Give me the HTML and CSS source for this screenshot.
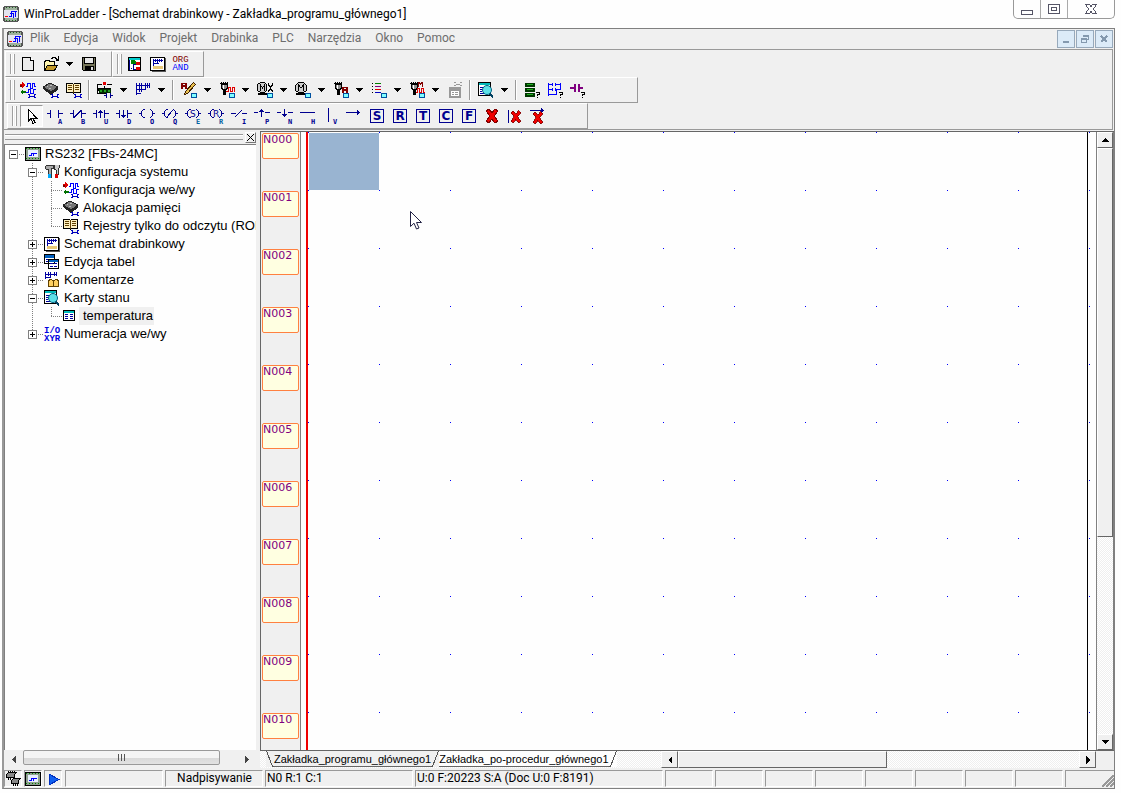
FILE: index.html
```html
<!DOCTYPE html>
<html lang="pl">
<head>
    <meta charset="UTF-8">
    <meta name="viewport" content="width=device-width, initial-scale=1.0">
    <title>WinProLadder</title>
    <link rel="stylesheet" href="styles.css">
</head>
<body>
    <svg class="sprite" width="0" height="0" aria-hidden="true">
        <defs>
            <!-- shared parts -->
            <g id="mini"><rect x="10.5" y="11.5" width="5" height="4" fill="#80ffff" stroke="#0050a0"/><path d="M10 11.5h6" stroke="#0050a0"/></g>
            <g id="wrench"><path d="M8 12.5h1.5M8 15.5h1.5M14 12.5h2M14 15.5h2M9.5 13v2M14.5 13v2M10 14.5h4" stroke="#0000c0" fill="none"/></g>
            <g id="lamp"><path d="M1 1.5h8M2.5 0v3M4.5 0v3M6.5 0v3M8.5 0v3" stroke="#000" fill="none"/><path d="M2.500 2.500h6v3l-1 2h-4l-1-2z" fill="#909090" stroke="#000"/><path d="M4 8h3v5H4z" fill="#000"/><path d="M4 3h1v4H4z" fill="#fff"/></g>
            <g id="rungs"><path d="M1.500 1v12M1 3.500h14M1 7.500h9M1 11.500h5M4.500 1v5M6.500 1v5M10.500 1v7M12.500 1v5M4.500 6v4M6.500 6v4M14.500 1v5" fill="none"/></g>
            <g id="contact"><path d="M0 5.500h4M3.500 2v8M11.500 2v8M12 5.500h4"/></g>
            <g id="coil"><path d="M0 5.500h2M5.500 1.500h-1l-2 2v4l2 2h1M10.500 1.500h1l2 2v4l-2 2h-1M14 5.500h2"/></g>
            <g id="cross"><path d="M2 3l3-2 3 4 3-4 3 2-4 5 4 5-3 2-3-4-3 4-3-2 4-5z" fill="#f00000" stroke="#800000"/></g>

            <symbol id="app" viewBox="0 0 16 16"><path d="M1 0h14v1h1v14h-1v1H1v-1H0V1h1z" fill="#555"/><path d="M2 1h12v3H2zM2 12h12v3H2z" fill="#9db09d"/><path d="M1 4h14v8H1z" fill="#e4e4f0"/><path d="M3 1.500h10M3 14.500h10" stroke="#206020" stroke-dasharray="1 2"/><path d="M2 10.500h3" stroke="#f00"/><path d="M6 10.500h2v-5h6M7 7.500h3v4M12.500 6v5" stroke="#00f" fill="none"/></symbol>
            <symbol id="plc" viewBox="0 0 16 16"><path d="M.5 1.500h15v13H.5z" fill="#8fa08f" stroke="#000"/><path d="M3 4h10v7H3z" fill="#e8f0ff"/><path d="M1 2.500h14M1 12.500h14" stroke="#008000" stroke-dasharray="1 2"/><path d="M4 9.500h2v-2h6M8.500 8v2" stroke="#00f" fill="none"/></symbol>
            <symbol id="new" viewBox="0 0 16 16"><path d="M2.500 1.500h8l3 3v10h-11z" fill="#ececec" stroke="#000"/><path d="M10.500 1.500v3h3" fill="#fff" stroke="#000"/></symbol>
            <symbol id="open" viewBox="0 0 16 16"><path d="M1.500 14.500v-9h1v-1h4v1h5v3" fill="#fff6b0" stroke="#000"/><path d="M1.500 14.500l3-5h10l-3 5z" fill="#c49a28" stroke="#000"/><path d="M8.500 3v-1h1v-1h3v1h1v1h1M15.500 0v4h-3" fill="none" stroke="#000"/></symbol>
            <symbol id="save" viewBox="0 0 16 16"><path d="M1.500 1.500h13v13h-12l-1-1z" fill="#77775a" stroke="#000"/><path d="M4 2h8v6H4z" fill="#e6e6e6" stroke="none"/><path d="M3.500 1.500v6h9v-6" fill="none" stroke="#000"/><path d="M4 10h9v5H4z" fill="#000"/><path d="M10 11h2v3h-2z" fill="#ddd"/></symbol>
            <symbol id="project" viewBox="0 0 16 16"><path d="M1.500 1.500h12v13h-12z" fill="#fff" stroke="#000"/><path d="M2 2h11v2H2z" fill="#0cc"/><path d="M2 4h1v10H2zM4 12h1v1H4z" fill="#00008b"/><path d="M4 4h4v1h1v3H4z" fill="#008000"/><path d="M6.500 8v5h3M6.500 8.500h3" stroke="#00008b" fill="none"/><path d="M9 6h4v3H9zM9 11h4v3H9z" fill="#e00000"/></symbol>
            <symbol id="ladder" viewBox="0 0 16 16"><path d="M.5 1.500h14v13H.5z" fill="#fff" stroke="#000"/><path d="M15 2h1v14H2v-1h13z" fill="#555"/><path d="M3.500 3v7M3 4.500h10M5.500 3v3M7.500 3v5M9.500 3v3M11.500 3v3M3 7.500h6" stroke="#0000a0" fill="none"/><path d="M3 10h10v3H3z" fill="#e8c878"/></symbol>
            <symbol id="io" viewBox="0 0 16 16"><path d="M0 2h2V0l3 3-3 3V4H0z" fill="#e00000"/><path d="M0 3h2v2H0z" fill="#700000"/><path d="M6 9H3V7L0 10l3 3v-2h3z" fill="#007000"/><path d="M6 4.500h1v-3h3v5h2v-5h2v3h2M6 10.500h2v-3M8 7.500h2v4h3v-4h3" stroke="#00f" fill="none"/><use href="#wrench"/></symbol>
            <symbol id="chip" viewBox="0 0 16 16"><path d="M0 5l7-4 8 4-7 5z" fill="#777" stroke="#222"/><path d="M0 5l8 5v3L0 7zM8 10l7-5v3l-7 5z" fill="#222"/><path d="M4 4.500h1M7 3.500h2M6 6.500h2" stroke="#bbb"/><path d="M8 12h8v4H8z" fill="#f4f4f4"/><use href="#wrench"/></symbol>
            <symbol id="book" viewBox="0 0 16 16"><path d="M.5 1.500h6l1 1 1-1h6v9h-6l-1 1-1-1h-6z" fill="#fff0c0" stroke="#000"/><path d="M7.500 2v9M2 3.500h4M2 5.500h4M2 7.500h4M9 3.500h4M9 5.500h4M9 7.500h4" stroke="#604000"/><path d="M8 11h8v5H8z" fill="#f0f0f0"/><use href="#wrench"/></symbol>
            <symbol id="tree" viewBox="0 0 16 16"><path d="M7.500 4v3M1 6.500h13M1.500 6v3M7.500 6v3M13.500 6v3M.5 2.500v9h9M0 2.500h5M10 2.500h5" stroke="#000" fill="none"/><path d="M6 0h3v3H6z" fill="#e00000"/><path d="M2.500 7.500h3v3h-3zM6.500 7.500h3v3h-3zM10.500 7.500h3v3h-3z" fill="#20a020" stroke="#003000"/><path d="M7 13.500h2M9.500 11v5M13.500 11v5M14 13.500h2" stroke="#00008b"/></symbol>
            <symbol id="net" viewBox="0 0 16 16"><use href="#rungs" stroke="#0000a0"/></symbol>
            <symbol id="pen" viewBox="0 0 16 16"><path d="M0 7V1h6v6H4V5H2v2zM2 2v1h2V2z" fill="#800000" fill-rule="evenodd"/><path d="M12.500.5l2 2-8 9-3 1 1-3z" fill="#e8c050" stroke="#402000"/><use href="#mini"/></symbol>
            <symbol id="lamp-pulse" viewBox="0 0 16 16"><use href="#lamp"/><path d="M7 9.500h2v-4h2v4h2v-4h2v4h1" fill="none" stroke="#e00000"/><use href="#mini"/></symbol>
            <symbol id="motor" viewBox="0 0 16 16"><path d="M3.500.5h5l3 3v5l-3 2h-5l-3-2v-5z" fill="#ccc" stroke="#000"/><path d="M3.500 9V3l2.500 3L8.500 3v6" fill="none" stroke="#000"/><path d="M1 11h10v2H1z" fill="#000"/><use href="#mini"/></symbol>
            <symbol id="motor-x" viewBox="0 0 16 16"><path d="M3.500.5h4l2 2v6l-2 2h-4l-3-2v-6z" fill="#ccc" stroke="#000"/><path d="M3.500 9V3l2 3 2-3v6" fill="none" stroke="#000"/><path d="M1 11h9v2H1z" fill="#000"/><path d="M11.500 1v2l2 2 2-2v-2M13.500 5v2l-2 2v1M13.500 7l2 2v1" fill="none" stroke="#000"/><use href="#mini"/></symbol>
            <symbol id="lamp-a" viewBox="0 0 16 16"><use href="#lamp"/><path d="M9 11V5h6v6h-2V9h-2v2zM11 6v1h2V6z" fill="#800000" fill-rule="evenodd"/><use href="#mini"/></symbol>
            <symbol id="list" viewBox="0 0 16 16"><path d="M1.500 1v10" stroke="#000" stroke-dasharray="1 2"/><path d="M4 1.500h6" stroke="#008000"/><path d="M4 4.500h6" stroke="#800080"/><path d="M4 7.500h6" stroke="#e00000"/><path d="M4 10.500h6" stroke="#0000c0"/><use href="#mini"/></symbol>
            <symbol id="lamp-m" viewBox="0 0 16 16"><use href="#lamp"/><path d="M9.500 5V0l2 2 2-2v5" fill="none" stroke="#800000"/><path d="M7 10.500h1v-4h2v4h2v-4h2v4h2" fill="none" stroke="#e00000"/><use href="#mini"/></symbol>
            <symbol id="off" viewBox="0 0 16 16"><path d="M2 5h12v11H2z" fill="#999"/><path d="M4 9h8v5H4z" fill="#fff"/><path d="M5 10.500h2M8 10.500h3M5 12.500h2M8 12.500h3M7 .500h2M13 .500h2M7 3.500h2M13 3.500h2M9 2.500h4" stroke="#999"/></symbol>
            <symbol id="search" viewBox="0 0 16 16"><path d="M.5.5h12v13H.5z" fill="#fff" stroke="#000"/><path d="M1 1h11v2H1z" fill="#0bb"/><path d="M2 5.500h4M2 7.500h2M2 9.500h2M2 11.500h4" stroke="#0000a0"/><circle cx="9" cy="8" r="4.500" fill="#5de0e8" stroke="#006080" shape-rendering="auto"/><path d="M12 11l3 3v2h-1l-3-4z" fill="#004060"/></symbol>
            <symbol id="stack" viewBox="0 0 16 16"><path d="M1 1h10v4H1zM1 6h10v4H1zM1 11h10v4H1z" fill="#003800"/><path d="M3 2.500h6M3 7.500h6M3 12.500h6" stroke="#20b020"/><path d="M12 10.500h3v2h-1.500v1M13.500 15v1" stroke="#000" fill="none"/></symbol>
            <symbol id="net-q" viewBox="0 0 16 16"><path d="M1.500 1v13M1 2.500h5M8 2.500h6M5.500 1v3M8.500 1v3M13.500 1v7M1 7.500h5M8 7.500h6M5.500 6v3M8.500 6v3M1 12.500h8M9.500 8v5" stroke="#00f" fill="none"/><path d="M12 10.500h3v2h-1.500v1M13.500 15v1" stroke="#000" fill="none"/></symbol>
            <symbol id="contact-q" viewBox="0 0 16 16"><path d="M0 5h4v2H0zM4 2h2v8H4zM8 2h2v8H8zM10 5h3v2h-3z" fill="#800080"/><path d="M11 10.500h3v2h-1.500v1M12.500 15v1" stroke="#000" fill="none"/></symbol>
            <symbol id="tools" viewBox="0 0 16 16"><path d="M1 3l2-2h6v3H7v9H4V5H2z" fill="#aaa" stroke="#333"/><path d="M10 1v4l2 1v4h2V5l1-1V1" fill="#ccc" stroke="#333"/><path d="M4 10h3v4H4z" fill="#0af"/><path d="M11 10h3v4h-3z" fill="#e00000"/></symbol>
            <symbol id="tables" viewBox="0 0 16 16"><path d="M.5.5h10v9H.5zM4.500 5.500h10v9h-10z" fill="#fff" stroke="#000"/><path d="M1 1h9v3H1zM5 6h9v2H5z" fill="#0060c0"/><path d="M2 5.500h2M2 7.500h2M6 9.500h3M10 9.500h3M6 12.500h3M10 12.500h3" stroke="#0000a0"/></symbol>
            <symbol id="comments" viewBox="0 0 16 16"><path d="M1.500 0v7M1 2.500h12M1 5.500h5M4.500 0v4M6.500 0v6M10.500 0v4M12.500 0v4" stroke="#0000a0" fill="none"/><path d="M4.500 8.500l2-1 3 1 3-1 2 1v6h-10z" fill="#ffd060" stroke="#604000"/><path d="M9.500 8v7" stroke="#604000"/></symbol>
            <symbol id="card" viewBox="0 0 16 16"><path d="M.5 2.500h11v10H.5z" fill="#fff" stroke="#000"/><path d="M1 3h10v2H1z" fill="#0bb"/><path d="M2 6.500h3M7 6.500h3M2 8.500h3M7 8.500h3M2 10.500h3M7 10.500h3" stroke="#0000a0"/></symbol>
            <symbol id="modules" viewBox="0 0 16 16"><path d="M1.500 3.500l2-2h8l-2 2v3h-8zM6.500 9.500l2-2h7l-2 2v3h-7z" fill="#888" stroke="#000"/><path d="M3.500 0v2M5.500 0v2M7.500 0v2M9.500 0v2M3.500 7v2M5.500 7v2M8.500 13v2M10.500 13v2M12.500 13v2" stroke="#000"/></symbol>
            <symbol id="arrow-down" viewBox="0 0 8 4"><path d="M0 0h7L3.500 4z"/></symbol>
            <symbol id="pointer" viewBox="0 0 12 19"><path d="M.5.5v15l3.500-3.300 2.500 5.800 2.500-1-2.500-5.500h5z" fill="#fff" stroke="#224"/></symbol>
        </defs>
    </svg>

    <header class="titlebar">
        <svg class="icon"><use href="#app"/></svg>
        <h1>WinProLadder - [Schemat drabinkowy - Zakładka_programu_głównego1]</h1>
        <div class="window-buttons">
            <button aria-label="Minimalizuj"><svg width="14" height="14"><path d="M1.500 8.500h11v4h-11z" fill="#fff" stroke="#555566"/></svg></button>
            <button aria-label="Maksymalizuj"><svg width="14" height="14"><path d="M1.500 2.500h11v9h-11zM4.500 5.500h5v3h-5z" fill="#fff" stroke="#555566"/></svg></button>
            <button class="close" aria-label="Zamknij"><svg width="14" height="14"><path d="M1.500 2.500h4l1.500 2 1.500-2h4l-3 4.500 3 4.500h-4l-1.500-2-1.500 2h-4l3-4.500z" fill="#fff" stroke="#555566"/></svg></button>
        </div>
    </header>

    <div class="frame">
        <nav class="menubar">
            <svg class="icon"><use href="#app"/></svg>
            <ul class="menu">
                <li><a href="#">Plik</a></li>
                <li><a href="#">Edycja</a></li>
                <li><a href="#">Widok</a></li>
                <li><a href="#">Projekt</a></li>
                <li><a href="#">Drabinka</a></li>
                <li><a href="#">PLC</a></li>
                <li><a href="#">Narzędzia</a></li>
                <li><a href="#">Okno</a></li>
                <li><a href="#">Pomoc</a></li>
            </ul>
            <div class="mdi-buttons">
                <button aria-label="Minimalizuj okno"><svg width="10" height="10"><path d="M2 7h6v2H2z" fill="#8499ae"/></svg></button>
                <button aria-label="Przywróć okno"><svg width="10" height="10"><path d="M3.500 3V1.500h5v4H7M1.500 4.500h5v4h-5zM1 5h6M3 2h6" fill="none" stroke="#8499ae"/></svg></button>
                <button aria-label="Zamknij okno"><svg width="10" height="10"><path d="M2 2l6 6M8 2L2 8" fill="none" stroke="#8499ae" stroke-width="2"/></svg></button>
            </div>
        </nav>

        <div class="toolbars">
            <div class="toolbar-row">
                <div class="toolbar">
                    <button class="tool" aria-label="Nowy"><svg class="icon"><use href="#new"/></svg></button>
                    <button class="tool" aria-label="Otwórz"><svg class="icon"><use href="#open"/></svg></button>
                    <button class="drop" aria-label="Ostatnie"><svg class="caret"><use href="#arrow-down"/></svg></button>
                    <button class="tool" aria-label="Zapisz"><svg class="icon"><use href="#save"/></svg></button>
                </div>
                <div class="toolbar">
                    <button class="tool" aria-label="Projekt"><svg class="icon"><use href="#project"/></svg></button>
                    <button class="tool" aria-label="Drabinka"><svg class="icon"><use href="#ladder"/></svg></button>
                    <button class="tool mnemonic"><span class="org">ORG</span><span class="and">AND</span></button>
                </div>
            </div>
            <div class="toolbar-row">
                <div class="toolbar toolbar-main">
                    <button class="tool" aria-label="Konfiguracja we/wy"><svg class="icon"><use href="#io"/></svg></button>
                    <button class="tool" aria-label="Alokacja pamięci"><svg class="icon"><use href="#chip"/></svg></button>
                    <button class="tool" aria-label="Rejestry"><svg class="icon"><use href="#book"/></svg></button>
                    <span class="sep"></span>
                    <button class="tool" aria-label="Struktura"><svg class="icon"><use href="#tree"/></svg></button>
                    <button class="drop" aria-label="Struktura, więcej"><svg class="caret"><use href="#arrow-down"/></svg></button>
                    <button class="tool" aria-label="Sieć"><svg class="icon"><use href="#net"/></svg></button>
                    <button class="drop" aria-label="Sieć, więcej"><svg class="caret"><use href="#arrow-down"/></svg></button>
                    <span class="sep"></span>
                    <button class="tool" aria-label="Komentarz"><svg class="icon"><use href="#pen"/></svg></button>
                    <button class="drop" aria-label="Komentarz, więcej"><svg class="caret"><use href="#arrow-down"/></svg></button>
                    <button class="tool" aria-label="Przebieg"><svg class="icon"><use href="#lamp-pulse"/></svg></button>
                    <button class="drop" aria-label="Przebieg, więcej"><svg class="caret"><use href="#arrow-down"/></svg></button>
                    <button class="tool" aria-label="Napęd"><svg class="icon"><use href="#motor-x"/></svg></button>
                    <button class="drop" aria-label="Napęd, więcej"><svg class="caret"><use href="#arrow-down"/></svg></button>
                    <button class="tool" aria-label="Silnik"><svg class="icon"><use href="#motor"/></svg></button>
                    <button class="drop" aria-label="Silnik, więcej"><svg class="caret"><use href="#arrow-down"/></svg></button>
                    <button class="tool" aria-label="ASCII"><svg class="icon"><use href="#lamp-a"/></svg></button>
                    <button class="drop" aria-label="ASCII, więcej"><svg class="caret"><use href="#arrow-down"/></svg></button>
                    <button class="tool" aria-label="Lista"><svg class="icon"><use href="#list"/></svg></button>
                    <button class="drop" aria-label="Lista, więcej"><svg class="caret"><use href="#arrow-down"/></svg></button>
                    <button class="tool" aria-label="Modbus"><svg class="icon"><use href="#lamp-m"/></svg></button>
                    <button class="drop" aria-label="Modbus, więcej"><svg class="caret"><use href="#arrow-down"/></svg></button>
                    <button class="tool" aria-label="Ustawienia" disabled><svg class="icon"><use href="#off"/></svg></button>
                    <span class="sep"></span>
                    <button class="tool" aria-label="Karty stanu"><svg class="icon"><use href="#search"/></svg></button>
                    <button class="drop" aria-label="Karty stanu, więcej"><svg class="caret"><use href="#arrow-down"/></svg></button>
                    <span class="sep"></span>
                    <button class="tool" aria-label="Użycie pamięci"><svg class="icon"><use href="#stack"/></svg></button>
                    <button class="tool" aria-label="Użycie sieci"><svg class="icon"><use href="#net-q"/></svg></button>
                    <button class="tool" aria-label="Użycie styków"><svg class="icon"><use href="#contact-q"/></svg></button>
                </div>
            </div>
            <div class="toolbar-row">
                <div class="toolbar toolbar-elements">
                    <button class="tool pressed" aria-label="Wskaźnik"><svg class="icon" viewBox="0 0 16 16"><path d="M4.500 1.500v12l2.500-3 2 5 2-1-2-4h4z" fill="#fff" stroke="#000"/></svg></button>
                    <button class="tool"><svg class="element" viewBox="0 0 16 16"><use href="#contact"/><text x="11" y="16">A</text></svg></button>
                    <button class="tool"><svg class="element" viewBox="0 0 16 16"><use href="#contact"/><path d="M4 9.500l7-7"/><text x="11" y="16">B</text></svg></button>
                    <button class="tool"><svg class="element" viewBox="0 0 16 16"><use href="#contact"/><path d="M7.500 2v8M5 4.500h5M6 3.500h3"/><text x="11" y="16">U</text></svg></button>
                    <button class="tool"><svg class="element" viewBox="0 0 16 16"><use href="#contact"/><path d="M7.500 2v8M5 7.500h5M6 8.500h3"/><text x="11" y="16">D</text></svg></button>
                    <button class="tool"><svg class="element" viewBox="0 0 16 16"><use href="#coil"/><text x="11" y="16">O</text></svg></button>
                    <button class="tool"><svg class="element" viewBox="0 0 16 16"><use href="#coil"/><path d="M5 9l6-7"/><text x="11" y="16">Q</text></svg></button>
                    <button class="tool"><svg class="element" viewBox="0 0 16 16"><use href="#coil"/><text class="in-coil" x="5" y="9">S</text><text class="teal" x="11" y="16">E</text></svg></button>
                    <button class="tool"><svg class="element" viewBox="0 0 16 16"><use href="#coil"/><text class="in-coil" x="5" y="9">R</text><text class="teal" x="11" y="16">R</text></svg></button>
                    <button class="tool"><svg class="element" viewBox="0 0 16 16"><path d="M0 5.500h5M4 9l7-7M11 5.500h5"/><text x="11" y="16">I</text></svg></button>
                    <button class="tool"><svg class="element" viewBox="0 0 16 16"><path d="M0 4.500h4M7.500 1v8M5 3.500h5M6 2.500h3M11 4.500h5"/><text x="11" y="16">P</text></svg></button>
                    <button class="tool"><svg class="element" viewBox="0 0 16 16"><path d="M0 4.500h4M7.500 1v8M5 6.500h5M6 7.500h3M11 4.500h5"/><text x="11" y="16">N</text></svg></button>
                    <button class="tool"><svg class="element" viewBox="0 0 16 16"><path d="M0 4.500h15"/><text x="11" y="16">H</text></svg></button>
                    <button class="tool"><svg class="element" viewBox="0 0 16 16"><path d="M5.500 0v14"/><text x="10" y="16">V</text></svg></button>
                    <button class="tool"><svg class="element" viewBox="0 0 16 16"><path d="M0 4.500h14M11.500 2v5M12.500 3v3"/></svg></button>
                    <button class="tool"><svg class="element boxed" viewBox="0 0 16 16"><rect x="1.500" y="1.500" width="13" height="13"/><text x="8" y="12">S</text></svg></button>
                    <button class="tool"><svg class="element boxed" viewBox="0 0 16 16"><rect x="1.500" y="1.500" width="13" height="13"/><text x="8" y="12">R</text></svg></button>
                    <button class="tool"><svg class="element boxed" viewBox="0 0 16 16"><rect x="1.500" y="1.500" width="13" height="13"/><text x="8" y="12">T</text></svg></button>
                    <button class="tool"><svg class="element boxed" viewBox="0 0 16 16"><rect x="1.500" y="1.500" width="13" height="13"/><text x="8" y="12">C</text></svg></button>
                    <button class="tool"><svg class="element boxed" viewBox="0 0 16 16"><rect x="1.500" y="1.500" width="13" height="13"/><text x="8" y="12">F</text></svg></button>
                    <button class="tool" aria-label="Usuń element"><svg class="element" viewBox="0 0 16 16"><use href="#cross"/></svg></button>
                    <button class="tool" aria-label="Usuń linię pionową"><svg class="element" viewBox="0 0 16 16"><path d="M1.500 2v13"/><g transform="translate(2 2) scale(.86)"><use href="#cross"/></g></svg></button>
                    <button class="tool" aria-label="Usuń linię poziomą"><svg class="element" viewBox="0 0 16 16"><path d="M0 2.500h14M11.500 0v5M12.500 1v3"/><g transform="translate(1 3) scale(.86)"><use href="#cross"/></g></svg></button>
                </div>
            </div>
        </div>

        <main class="workspace">
            <aside class="dock">
                <div class="dock-header">
                    <span class="dock-grip"></span>
                    <button class="dock-close" aria-label="Zamknij panel"><svg width="7" height="7"><path d="M0 0l7 7M7 0L0 7" stroke="#000"/></svg></button>
                </div>
                <div class="tree-panel">
                    <ul class="tree">
                        <li>
                            <div class="node"><button class="toggle open" aria-label="Zwiń"></button><svg class="icon"><use href="#plc"/></svg><span class="label">RS232 [FBs-24MC]</span></div>
                            <ul>
                                <li>
                                    <div class="node"><button class="toggle open" aria-label="Zwiń"></button><svg class="icon"><use href="#tools"/></svg><span class="label">Konfiguracja systemu</span></div>
                                    <ul>
                                        <li><div class="node leaf"><svg class="icon"><use href="#io"/></svg><span class="label">Konfiguracja we/wy</span></div></li>
                                        <li><div class="node leaf"><svg class="icon"><use href="#chip"/></svg><span class="label">Alokacja pamięci</span></div></li>
                                        <li><div class="node leaf"><svg class="icon"><use href="#book"/></svg><span class="label">Rejestry tylko do odczytu (ROR)</span></div></li>
                                    </ul>
                                </li>
                                <li><div class="node"><button class="toggle" aria-label="Rozwiń"></button><svg class="icon"><use href="#ladder"/></svg><span class="label">Schemat drabinkowy</span></div></li>
                                <li><div class="node"><button class="toggle" aria-label="Rozwiń"></button><svg class="icon"><use href="#tables"/></svg><span class="label">Edycja tabel</span></div></li>
                                <li><div class="node"><button class="toggle" aria-label="Rozwiń"></button><svg class="icon"><use href="#comments"/></svg><span class="label">Komentarze</span></div></li>
                                <li>
                                    <div class="node"><button class="toggle open" aria-label="Zwiń"></button><svg class="icon"><use href="#search"/></svg><span class="label">Karty stanu</span></div>
                                    <ul>
                                        <li><div class="node leaf"><svg class="icon"><use href="#card"/></svg><span class="label selected">temperatura</span></div></li>
                                    </ul>
                                </li>
                                <li><div class="node"><button class="toggle" aria-label="Rozwiń"></button><svg class="icon io-numbers" viewBox="0 0 16 16"><text x="0" y="7">I/O</text><text x="0" y="15">XYR</text></svg><span class="label">Numeracja we/wy</span></div></li>
                            </ul>
                        </li>
                    </ul>
                </div>
                <div class="soft-scroll">
                    <button aria-label="W lewo"><svg width="4" height="7"><path d="M4 0v7L0 3.500z" fill="#444"/></svg></button>
                    <div class="soft-track"><div class="soft-thumb"><i></i><i></i><i></i></div></div>
                    <button aria-label="W prawo"><svg width="4" height="7"><path d="M0 0v7l4-3.500z" fill="#444"/></svg></button>
                </div>
            </aside>

            <section class="editor">
                <div class="editor-body">
                    <ol class="gutter">
                        <li>N000</li>
                        <li>N001</li>
                        <li>N002</li>
                        <li>N003</li>
                        <li>N004</li>
                        <li>N005</li>
                        <li>N006</li>
                        <li>N007</li>
                        <li>N008</li>
                        <li>N009</li>
                        <li>N010</li>
                    </ol>
                    <div class="canvas">
                        <svg class="grid" width="100%" height="100%">
                            <defs>
                                <pattern id="dots" width="71" height="58" patternUnits="userSpaceOnUse"><rect width="1" height="1" fill="#00f"/></pattern>
                            </defs>
                            <rect x="1" y="1" width="70" height="57" fill="#99b4d1"/>
                            <rect width="100%" height="100%" fill="url(#dots)"/>
                            <rect x="100%" width="1" height="100%" transform="translate(-9 0)"/>
                        </svg>
                        <svg class="pointer"><use href="#pointer"/></svg>
                    </div>
                    <div class="scroll scroll-v">
                        <button aria-label="W górę"><svg width="8" height="8"><path d="M0 6h8L4 2z"/></svg></button>
                        <div class="thumb"></div>
                        <button aria-label="W dół"><svg width="8" height="8"><path d="M0 2h8L4 6z"/></svg></button>
                    </div>
                </div>
                <div class="editor-foot">
                    <div class="tabs">
                        <a href="#" class="tab active"><svg width="8" height="16"><path d="M.5 0l6 15.500H8"/></svg><span>Zakładka_programu_głównego1</span><svg width="8" height="16"><path d="M7.500 0l-6 15.500H0"/></svg></a>
                        <a href="#" class="tab"><span>Zakładka_po-procedur_głównego1</span><svg width="8" height="16"><path d="M7.500 0l-6 15.500H0"/></svg></a>
                    </div>
                    <div class="scroll scroll-h">
                        <button aria-label="W lewo"><svg width="8" height="8"><path d="M6 0v8L2 4z"/></svg></button>
                        <div class="thumb"></div>
                        <button aria-label="W prawo"><svg width="8" height="8"><path d="M2 0v8l4-4z"/></svg></button>
                    </div>
                    <span class="corner"></span>
                </div>
            </section>
        </main>

        <footer class="statusbar">
            <span class="cell cell-icon"><svg class="icon"><use href="#modules"/></svg></span>
            <span class="cell cell-icon"><svg class="icon"><use href="#plc"/></svg></span>
            <span class="cell cell-icon"><svg class="icon" viewBox="0 0 16 16"><path d="M4 3l10 5.500L4 14z" fill="#1060f0" stroke="#0030c0"/></svg></span>
            <span class="cell cell-message"></span>
            <span class="cell cell-mode">Nadpisywanie</span>
            <span class="cell cell-position">N0 R:1 C:1</span>
            <span class="cell cell-memory">U:0 F:20223 S:A (Doc U:0 F:8191)</span>
            <span class="cell"></span>
            <span class="cell"></span>
            <span class="cell"></span>
            <span class="cell"></span>
            <span class="cell"></span>
            <span class="cell"></span>
            <span class="cell"></span>
            <span class="cell"></span>
            <span class="cell cell-grip"><svg width="12" height="12"><path d="M0 12L12 0M4 12l8-8M8 12l4-4" stroke="#999" stroke-width="2"/></svg></span>
        </footer>
    </div>
</body>
</html>
```
FILE: styles.css
```css
* {
    box-sizing: border-box;
}
body {
    margin: 0;
    height: 100vh;
    display: flex;
    flex-direction: column;
    overflow: hidden;
    background: #fefefe;
    color: #000;
    font-family: Roboto, "Open Sans", sans-serif;
    font-size: 12px;
}
button {
    display: flex;
    align-items: center;
    justify-content: center;
    padding: 0;
    border: none;
    background: none;
    font: inherit;
}
ul, ol {
    margin: 0;
    padding: 0;
    list-style: none;
}
a {
    color: inherit;
    text-decoration: none;
}
svg {
    display: block;
    flex: none;
    shape-rendering: crispEdges;
}
.sprite {
    position: absolute;
}
.icon {
    width: 16px;
    height: 16px;
}

/* title bar */
.titlebar {
    display: flex;
    align-items: center;
    gap: 5px;
    height: 28px;
    padding: 0 6px 0 3px;
}
.titlebar h1 {
    flex: 1;
    margin: 0;
    font-size: 12px;
    font-weight: normal;
    white-space: nowrap;
}
.window-buttons {
    display: flex;
    align-self: flex-start;
    height: 19px;
    border: 1px solid #999;
    border-top: none;
    border-radius: 0 0 5px 5px;
}
.window-buttons button {
    width: 27px;
    border-right: 1px solid #aaa;
}
.window-buttons .close {
    width: 46px;
    border-right: none;
}

/* main frame */
.frame {
    flex: 1;
    min-height: 0;
    display: flex;
    flex-direction: column;
    margin: 0 6px 4px 2px;
    border: 1px solid #808080;
    border-left: 2px solid #999;
    background: #f0f0f0;
}
.menubar {
    display: flex;
    align-items: center;
    height: 20px;
    padding: 0 1px 0 3px;
    color: #6d6d6d;
}
.menu {
    flex: 1;
    display: flex;
    gap: 14px;
    padding: 0 0 2px 7px;
}
.mdi-buttons {
    display: flex;
    gap: 1px;
}
.mdi-buttons button {
    width: 18px;
    height: 18px;
    border: 1px solid #97a9bb;
    background: #dcebf8;
}

/* toolbars */
.toolbars {
    margin-right: 1px;
    padding: 1px 0 0 1px;
    border: 1px solid #999;
    border-left: none;
}
.toolbar-row {
    display: flex;
    height: 26px;
}
.toolbar {
    display: flex;
    align-items: center;
    padding: 0 11px 0 4px;
    border: 1px solid;
    border-color: #fff #999 #999 #fff;
}
.toolbar::before {
    content: "";
    width: 3px;
    height: 20px;
    margin-right: 1px;
    border: solid #a0a0a0;
    border-width: 0 1px;
    background: linear-gradient(90deg, #fff 1px, #f0f0f0 1px, #f0f0f0 2px, #fff 2px);
}
.toolbar-main {
    padding-right: 48px;
}
.toolbar-elements {
    margin-left: 2px;
    padding-right: 38px;
}
.toolbar-elements::before {
    margin-right: 3px;
}
.tool {
    width: 23px;
    height: 22px;
}
.drop {
    width: 15px;
    height: 22px;
}
.caret {
    width: 8px;
    height: 4px;
}
.sep {
    width: 8px;
    height: 20px;
    background: linear-gradient(90deg, transparent 3px, #999 3px, #999 4px, #fff 4px, #fff 5px, transparent 5px);
}
.mnemonic {
    flex-direction: column;
    font: 9px/8px "Liberation Mono", monospace;
}
.org {
    color: #800000;
}
.and {
    color: #0000ff;
}
.pressed {
    border: 1px solid;
    border-color: #999 #fff #fff #999;
    background: #f8f8f8;
}
.element {
    width: 16px;
    height: 16px;
    overflow: visible;
    fill: none;
    stroke: #000090;
}
.element text {
    fill: #000090;
    stroke: none;
    font: bold 7px "DejaVu Sans Mono", monospace;
}
.element .teal {
    fill: #0060a0;
}
.element .in-coil {
    font: 9px "DejaVu Sans", sans-serif;
}
.boxed text {
    font: bold 12px "DejaVu Sans", sans-serif;
    text-anchor: middle;
}

/* project tree */
.workspace {
    flex: 1;
    min-height: 0;
    display: flex;
}
.dock {
    display: flex;
    flex-direction: column;
    width: 252px;
    margin-right: 4px;
}
.dock-header {
    display: flex;
    align-items: center;
    gap: 2px;
    height: 14px;
    padding-left: 1px;
}
.dock-grip {
    flex: 1;
    height: 6px;
    border: solid #999;
    border-width: 1px 0;
    background: linear-gradient(#fff 1px, transparent 1px);
}
.dock-close {
    width: 11px;
    height: 11px;
    border: 1px solid;
    border-color: #fff #777 #777 #fff;
}
.tree-panel {
    flex: 1;
    overflow: hidden;
    padding-left: 4px;
    border: solid #808080;
    border-width: 1px 0 0 1px;
    background: #fefefe;
}
.tree {
    font: 13px/18px "Liberation Sans", Arial, sans-serif;
}
.tree ul {
    margin-left: 19px;
}
.tree ul li {
    background: repeating-linear-gradient(#808080 0 1px, transparent 1px 2px) 4px 0 / 1px 100% no-repeat;
}
.tree ul li:last-child {
    background-size: 1px 9px;
}
.node {
    display: flex;
    align-items: center;
    height: 18px;
    background: repeating-linear-gradient(90deg, #808080 0 1px, transparent 1px 2px) 4px 9px / 12px 1px no-repeat;
}
.leaf {
    padding-left: 16px;
}
.toggle {
    width: 9px;
    height: 9px;
    margin-right: 7px;
    border: 1px solid #808080;
    background:
        linear-gradient(#000, #000) 1px 3px / 5px 1px no-repeat,
        linear-gradient(#000, #000) 3px 1px / 1px 5px no-repeat,
        #fff;
}
.toggle.open {
    background: linear-gradient(#000, #000) 1px 3px / 5px 1px no-repeat, #fff;
}
.label {
    padding: 0 1px 0 4px;
    white-space: nowrap;
}
.selected {
    background: #f0f0f0;
}
.io-numbers {
    overflow: visible;
}
.io-numbers text {
    fill: #0000e0;
    font: bold 9px "Liberation Mono", monospace;
}
.soft-scroll {
    display: flex;
    height: 18px;
    padding: 0 1px;
}
.soft-scroll button {
    width: 17px;
}
.soft-track {
    flex: 1;
}
.soft-thumb {
    display: flex;
    align-items: center;
    justify-content: center;
    gap: 2px;
    width: 91%;
    height: 15px;
    margin-left: 1px;
    border: 1px solid #999;
    border-radius: 2px;
    background: linear-gradient(#f4f4f4 50%, #d8d8d8 50%, #e2e2e2);
}
.soft-thumb i {
    width: 1px;
    height: 7px;
    background: #555;
}

/* ladder editor */
.editor {
    flex: 1;
    min-width: 0;
    display: flex;
    flex-direction: column;
    padding: 1px 0 0;
}
.editor-body {
    flex: 1;
    min-height: 0;
    display: flex;
    overflow: hidden;
    border: solid #666;
    border-width: 1px 0 1px 1px;
    background: #fefefe;
}
.gutter {
    width: 40px;
    padding: 1px 1px 0;
    overflow: hidden;
    border-right: 1px solid #808080;
    background: #f0f0f0;
}
.gutter li {
    height: 26px;
    margin-bottom: 32px;
    border: 1px solid #ff8040;
    border-radius: 2px;
    background: #ffffe1;
    color: #800080;
    font: 11px/11px "DejaVu Sans", Verdana, sans-serif;
}
.canvas {
    position: relative;
    flex: 1;
    min-width: 0;
    margin-left: 5px;
    border-left: 2px solid #f00000;
}
.pointer {
    position: absolute;
    left: 102px;
    top: 79px;
    width: 12px;
    height: 19px;
    shape-rendering: auto;
}
.scroll {
    display: flex;
    background: repeating-conic-gradient(#fff 0 25%, #efefef 0 50%) 0 0 / 2px 2px;
}
.scroll button, .thumb {
    border: 1px solid;
    border-color: #fff #666 #666 #fff;
    background: #f0f0f0;
}
.scroll-v {
    flex-direction: column;
    justify-content: space-between;
    width: 18px;
    border: solid #808080;
    border-width: 0 1px;
}
.scroll-v button {
    height: 16px;
}
.scroll-v .thumb {
    height: 63%;
    margin-bottom: auto;
}
.editor-foot {
    display: flex;
    height: 17px;
}
.tabs {
    flex: 1;
    display: flex;
    align-items: flex-start;
    padding-left: 6px;
    background: repeating-conic-gradient(#fff 0 25%, #efefef 0 50%) 0 0 / 2px 2px;
    font: 11px/17px "Liberation Sans", Arial, sans-serif;
}
.tab {
    display: flex;
    height: 16px;
    background: #fefefe;
}
.tab.active {
    background: #f0f0f0;
}
.tab span {
    border-bottom: 1px solid #666;
    white-space: nowrap;
}
.tab path {
    fill: none;
    stroke: #555;
}
.scroll-h {
    width: 435px;
}
.scroll-h button {
    width: 17px;
}
.scroll-h .thumb {
    width: 48%;
    margin-right: auto;
}
.corner {
    width: 18px;
}

/* status bar */
.statusbar {
    display: flex;
    gap: 2px;
    height: 20px;
    padding: 2px 0 1px;
}
.cell {
    width: 48px;
    overflow: hidden;
    padding-left: 1px;
    border: 1px solid;
    border-color: #999 #fff #fff #999;
    line-height: 15px;
    white-space: nowrap;
}
.cell-icon {
    width: 18px;
    padding: 0;
}
.cell-message {
    width: 98px;
    margin-left: 1px;
}
.cell-mode {
    width: 98px;
    text-align: center;
}
.cell-position {
    width: 148px;
}
.cell-memory {
    width: 248px;
}
.cell-grip {
    flex: 1;
    display: flex;
    align-items: flex-end;
    justify-content: flex-end;
    border-bottom: none;
    border-right: none;
}
```
